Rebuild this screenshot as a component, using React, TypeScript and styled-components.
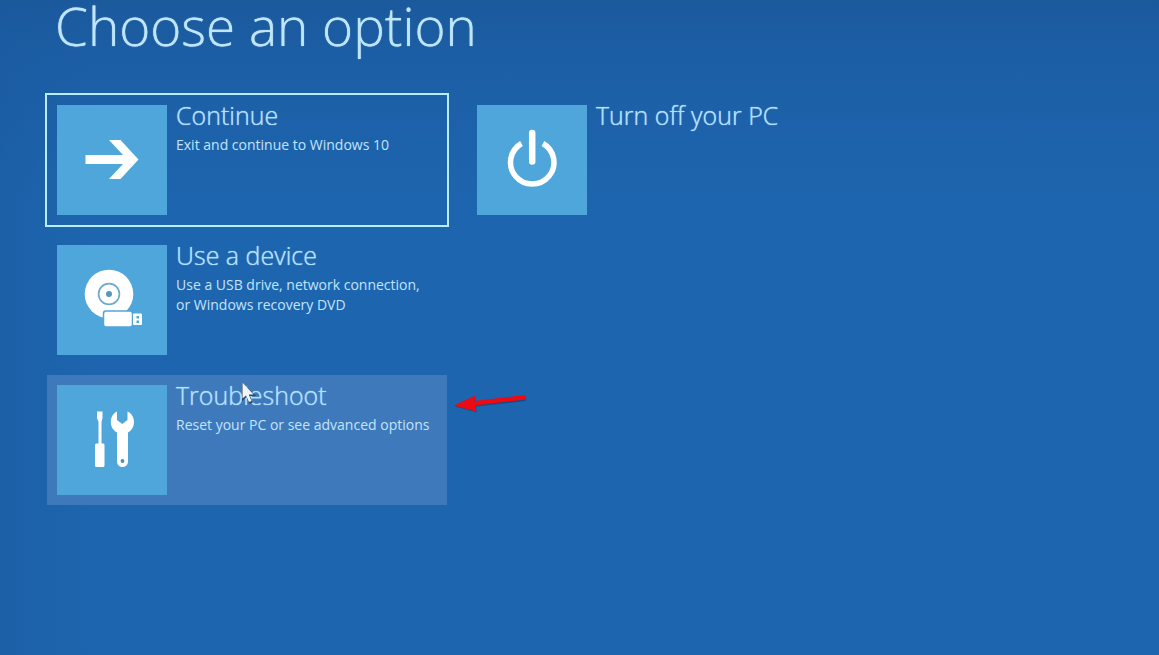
import React from "react";
import styled, { createGlobalStyle, css } from "styled-components";

const GlobalStyle = createGlobalStyle`
  * { box-sizing: border-box; }
  body {
    margin: 0;
    background: #1d65ae;
    font-family: "Open Sans", "Noto Sans", sans-serif;
  }
`;

const Screen = styled.main`
  min-height: 100vh;
  padding: 0 47px 48px;
  background:
    linear-gradient(to right, rgba(26, 88, 156, 0.35), rgba(26, 88, 156, 0) 90px),
    linear-gradient(to bottom, #1b599d 0, #1c5fa6 70px, #1d65ae 200px);
`;

const Heading = styled.h1`
  margin: 0 0 43px;
  padding-left: 8px;
  font-size: 53px;
  line-height: 52px;
  font-weight: 300;
  color: #bfe6ff;
  text-shadow: 0 0 1px #bfe6ff;
`;

const Options = styled.nav`
  display: grid;
  grid-template-columns: repeat(auto-fill, 400px);
  gap: 10px 20px;
`;

const Column = styled.div`
  display: flex;
  flex-direction: column;
  gap: 10px;
`;

const Tile = styled.button<{ $focused?: boolean; $hovered?: boolean }>`
  position: relative;
  display: flex;
  align-items: flex-start;
  gap: 9px;
  min-height: 130px;
  padding: 10px;
  border: 0;
  background: ${(p) => (p.$hovered ? "#3d79bb" : "transparent")};
  color: #b3e0ff;
  font: inherit;
  text-align: left;
  cursor: default;
  outline: none;
  ${(p) =>
    p.$focused &&
    css`
      outline: 2px solid #b8ecff;
    `}
`;

const IconBox = styled.span`
  flex: none;
  width: 110px;
  height: 110px;
  background: #4fa6db;

  svg {
    display: block;
  }
`;

const Copy = styled.span`
  display: flex;
  flex-direction: column;
  gap: 10px;
`;

const Title = styled.span`
  font-size: 25px;
  line-height: 20px;
  font-weight: 300;
  white-space: nowrap;
  text-shadow: 0 0 1px #b3e0ff;
`;

const Description = styled.span`
  font-size: 14px;
  line-height: 20px;
  color: #c3e4fb;
  white-space: pre-line;
`;

const Pointer = styled.svg`
  position: absolute;
  left: 194px;
  top: 7px;
`;

const Callout = styled.svg`
  position: absolute;
  left: 100%;
  top: 14px;
  margin-left: 6px;
`;

const ArrowIcon = () => (
  <svg width="110" height="110" viewBox="0 0 110 110" aria-hidden="true">
    <path d="M28.500 50H66L52 35H63.500L81.500 54.500L63.500 74H52L66 59H28.500Z" fill="#fff" />
  </svg>
);

const PowerIcon = () => (
  <svg width="110" height="110" viewBox="0 0 110 110" fill="none" stroke="#fff" aria-hidden="true">
    <path d="M44.500 38.500A21.700 21.700 0 1 0 66 38.500" strokeWidth="5.500" />
    <path d="M55.200 28V56.500" strokeWidth="6.500" strokeLinecap="round" />
  </svg>
);

const DeviceIcon = () => (
  <svg width="110" height="110" viewBox="0 0 110 110" fill="#fff" aria-hidden="true">
    <circle cx="52" cy="49" r="24.300" />
    <circle cx="52" cy="49" r="10.400" fill="none" stroke="#6fa9cb" strokeWidth="1.700" />
    <circle cx="52" cy="49" r="3" fill="#5796bd" />
    <rect x="46.500" y="66" width="29" height="16" rx="2.500" stroke="#4fa6db" strokeWidth="1.500" />
    <rect x="76" y="68.500" width="9" height="11.500" rx="1" />
    <rect x="79.500" y="71" width="2.500" height="2.500" fill="#4fa6db" />
    <rect x="79.500" y="75.500" width="2.500" height="2.500" fill="#4fa6db" />
  </svg>
);

const ToolsIcon = () => (
  <svg width="110" height="110" viewBox="0 0 110 110" fill="#fff" aria-hidden="true">
    <path d="M40 26.500H45.500V33L44.500 37V58.500H46.500Q47.500 58.500 47.500 60V80.500Q47.500 82 46 82H39.500Q38 82 38 80.500V60Q38 58.500 39 58.500H41.500V37L40 33Z" />
    <path d="M60 26.500C56 28.500 53.800 32.500 53.800 37C53.800 42 56.500 45.500 60 47.500V76.500A5.500 5.500 0 0 0 71 76.500V47.500C74.500 45.500 77 42 77 37C77 32.500 74.800 28.500 70.500 26.500V35L65.300 39L60 35Z" />
    <circle cx="65.500" cy="76" r="1.900" fill="#4b8eb9" />
  </svg>
);

const MousePointer = () => (
  <Pointer width="16" height="24" viewBox="0 0 16 24" aria-hidden="true">
    <path d="M1 0V19L5.500 15L8.500 22L12 20.500L9 14H15Z" fill="#233f60" opacity="0.9" />
    <path d="M1.500 0.500V16.500L5 13.500L8 20L10.500 19L7.800 12.500H12.500Z" fill="#f2f5f8" />
  </Pointer>
);

const RedArrow = () => (
  <Callout width="76" height="26" viewBox="0 0 76 26" aria-hidden="true">
    <path d="M2 17.500L22.500 8.500L22 13.500L72.500 7.500V12L23 17.500L24 23.500Z" fill="#173f70" opacity="0.7" />
    <path d="M0.500 16.500L22.500 6.500L21.500 12L72 6V10.500L22 16.500L23.500 22.500Z" fill="#ee0a12" />
  </Callout>
);

type Option = {
  title: string;
  description?: string;
  icon: React.ReactNode;
  focused?: boolean;
  hovered?: boolean;
};

const bootOptions: Option[] = [
  { title: "Continue", description: "Exit and continue to Windows 10", icon: <ArrowIcon />, focused: true },
  {
    title: "Use a device",
    description: "Use a USB drive, network connection,\nor Windows recovery DVD",
    icon: <DeviceIcon />,
  },
  {
    title: "Troubleshoot",
    description: "Reset your PC or see advanced options",
    icon: <ToolsIcon />,
    hovered: true,
  },
];

const powerOptions: Option[] = [{ title: "Turn off your PC", icon: <PowerIcon /> }];

const OptionTile = ({ title, description, icon, focused, hovered }: Option) => (
  <Tile type="button" $focused={focused} $hovered={hovered}>
    <IconBox>{icon}</IconBox>
    <Copy>
      <Title>{title}</Title>
      {description && <Description>{description}</Description>}
    </Copy>
    {hovered && <MousePointer />}
    {hovered && <RedArrow />}
  </Tile>
);

export default function App() {
  return (
    <>
      <GlobalStyle />
      <Screen>
        <Heading>Choose an option</Heading>
        <Options aria-label="Startup options">
          {[bootOptions, powerOptions].map((column, index) => (
            <Column key={index}>
              {column.map((option) => (
                <OptionTile key={option.title} {...option} />
              ))}
            </Column>
          ))}
        </Options>
      </Screen>
    </>
  );
}
